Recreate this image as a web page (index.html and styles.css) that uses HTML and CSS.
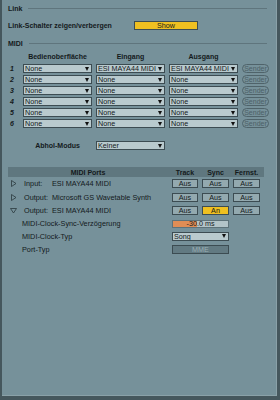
FILE: index.html
```html
<!DOCTYPE html>
<html>

<head>
	<title>MIDI Einstellungen</title>
	<link rel="stylesheet" href="styles.css">
</head>

<body>
	<div class="panel">
		<div class="section section-link">
			<span>Link</span>
			<div class="rule"></div>
		</div>
		<div class="option-row">
			<span class="option-label">Link-Schalter zeigen/verbergen</span>
			<div class="toggle on wide">Show</div>
		</div>

		<div class="section section-midi">
			<span>MIDI</span>
			<div class="rule"></div>
		</div>

		<div class="surfaces">
			<div></div>
			<div class="col-head">Bedienoberfläche</div>
			<div class="col-head">Eingang</div>
			<div class="col-head">Ausgang</div>
			<div></div>

			<div class="num">1</div>
			<div class="select"><span class="value">None</span><span class="arrow"></span></div>
			<div class="select"><span class="value">ESI MAYA44 MIDI</span><span class="arrow"></span></div>
			<div class="select"><span class="value">ESI MAYA44 MIDI</span><span class="arrow"></span></div>
			<div class="sender">Sender</div>

			<div class="num">2</div>
			<div class="select"><span class="value">None</span><span class="arrow"></span></div>
			<div class="select"><span class="value">None</span><span class="arrow"></span></div>
			<div class="select"><span class="value">None</span><span class="arrow"></span></div>
			<div class="sender">Sender</div>

			<div class="num">3</div>
			<div class="select"><span class="value">None</span><span class="arrow"></span></div>
			<div class="select"><span class="value">None</span><span class="arrow"></span></div>
			<div class="select"><span class="value">None</span><span class="arrow"></span></div>
			<div class="sender">Sender</div>

			<div class="num">4</div>
			<div class="select"><span class="value">None</span><span class="arrow"></span></div>
			<div class="select"><span class="value">None</span><span class="arrow"></span></div>
			<div class="select"><span class="value">None</span><span class="arrow"></span></div>
			<div class="sender">Sender</div>

			<div class="num">5</div>
			<div class="select"><span class="value">None</span><span class="arrow"></span></div>
			<div class="select"><span class="value">None</span><span class="arrow"></span></div>
			<div class="select"><span class="value">None</span><span class="arrow"></span></div>
			<div class="sender">Sender</div>

			<div class="num">6</div>
			<div class="select"><span class="value">None</span><span class="arrow"></span></div>
			<div class="select"><span class="value">None</span><span class="arrow"></span></div>
			<div class="select"><span class="value">None</span><span class="arrow"></span></div>
			<div class="sender">Sender</div>
		</div>

		<div class="takeover">
			<div></div>
			<div class="col-head">Abhol-Modus</div>
			<div class="select"><span class="value">Keiner</span><span class="arrow"></span></div>
		</div>

		<div class="ports">
			<div class="ports-head name">MIDI Ports</div>
			<div class="ports-head">Track</div>
			<div class="ports-head">Sync</div>
			<div class="ports-head">Fernst.</div>

			<div class="port">
				<svg class="disclose" width="7" height="7" viewBox="0 0 7 7"><polygon points="1.5,0.5 6,3.5 1.5,6.5" /></svg>
				<span class="port-kind">Input:</span>
				<span>ESI MAYA44 MIDI</span>
			</div>
			<div class="cell"><div class="toggle">Aus</div></div>
			<div class="cell"><div class="toggle">Aus</div></div>
			<div class="cell"><div class="toggle">Aus</div></div>

			<div class="port">
				<svg class="disclose" width="7" height="7" viewBox="0 0 7 7"><polygon points="1.5,0.5 6,3.5 1.5,6.5" /></svg>
				<span class="port-kind">Output:</span>
				<span>Microsoft GS Wavetable Synth</span>
			</div>
			<div class="cell"><div class="toggle">Aus</div></div>
			<div class="cell"><div class="toggle">Aus</div></div>
			<div class="cell"><div class="toggle">Aus</div></div>

			<div class="port">
				<svg class="disclose" width="7" height="7" viewBox="0 0 7 7"><polygon points="0.5,1.5 6.5,1.5 3.5,6" /></svg>
				<span class="port-kind">Output:</span>
				<span>ESI MAYA44 MIDI</span>
			</div>
			<div class="cell"><div class="toggle">Aus</div></div>
			<div class="cell"><div class="toggle on">An</div></div>
			<div class="cell"><div class="toggle">Aus</div></div>

			<div class="sub">MIDI-Clock-Sync-Verzögerung</div>
			<div class="cell span2"><div class="slider">-30.0 ms</div></div>
			<div></div>

			<div class="sub">MIDI-Clock-Typ</div>
			<div class="cell span2"><div class="select"><span class="value">Song</span><span class="arrow"></span></div></div>
			<div></div>

			<div class="sub">Port-Typ</div>
			<div class="cell span2"><div class="toggle disabled">MME</div></div>
			<div></div>
		</div>
	</div>
</body>

</html>
```

FILE: styles.css
```css
body {
	margin: 0;
	background-color: #45575d;
	font-family: "Liberation Sans", Arial, sans-serif;
	font-size: 7px;
	color: #141a1c;
}

.panel {
	margin: 0 3px 0 2px;
	height: 396px;
	padding: 2px 9px 0 6px;
	box-sizing: border-box;
	background-color: #76919a;
	border-right: 1px solid #8aa1a8;
	border-bottom: 1px solid #8aa1a8;
}

.section {
	display: flex;
	align-items: center;
	gap: 6px;
	height: 12px;
	font-weight: bold;
}

.section-midi {
	margin-top: 7px;
}

.rule {
	flex: 1;
	border-top: 1px solid #5f757d;
}

.option-row {
	display: flex;
	align-items: center;
	height: 10px;
	margin-top: 6px;
}

.option-label {
	width: 126px;
	font-weight: bold;
}

.toggle {
	height: 9px;
	box-sizing: border-box;
	display: flex;
	align-items: center;
	justify-content: center;
	border: 1px solid #3c4c52;
	background-color: #93a9af;
	font-size: 7.2px;
}

.toggle.on {
	background-color: #efc021;
}

.toggle.wide {
	width: 64px;
}

.toggle.disabled {
	background-color: #627a82;
	color: #9cb0b5;
	width: 100%;
}

.surfaces,
.takeover {
	display: grid;
	grid-template-columns: 11px 69px 69px 69px 27px;
	column-gap: 4px;
	row-gap: 2px;
}

.surfaces {
	grid-template-rows: 11px repeat(6, 9px);
	margin-top: 2px;
}

.takeover {
	grid-template-rows: 9px;
	margin-top: 13px;
}

.col-head {
	display: flex;
	align-items: center;
	justify-content: center;
	font-weight: bold;
}

.num {
	display: flex;
	align-items: center;
	padding-left: 2px;
	font-weight: bold;
	font-style: italic;
}

.select {
	display: flex;
	align-items: center;
	height: 9px;
	box-sizing: border-box;
	padding: 0 2px 0 1px;
	border: 1px solid #3c4c52;
	background-color: #b9cace;
	font-size: 7.2px;
	overflow: hidden;
	white-space: nowrap;
}

.value {
	flex: 1;
	overflow: hidden;
}

.arrow {
	flex: none;
	width: 0;
	height: 0;
	margin-left: 1px;
	border-left: 2.5px solid transparent;
	border-right: 2.5px solid transparent;
	border-top: 4px solid #111;
}

.sender {
	display: flex;
	align-items: center;
	justify-content: center;
	height: 9px;
	box-sizing: border-box;
	border: 1px solid #4f636a;
	border-radius: 5px;
	color: #4c6067;
	font-size: 7px;
	line-height: 1;
	overflow: hidden;
}

.ports {
	display: grid;
	grid-template-columns: 1fr 26px 27px 27px;
	grid-template-rows: 10px 13px 14px 13px 13px 12px 14px;
	column-gap: 4px;
	width: 252px;
	margin-top: 17px;
}

.ports-head {
	display: flex;
	align-items: center;
	justify-content: center;
	background-color: #5f777f;
	font-weight: bold;
	margin-right: -4px;
	padding-right: 4px;
}

.ports-head:last-of-type {
	margin-right: 0;
	padding-right: 0;
}

.port {
	display: flex;
	align-items: center;
	font-size: 7.3px;
	white-space: nowrap;
}

.disclose {
	margin: 0 7px 0 2px;
}

.disclose polygon {
	fill: none;
	stroke: #2b393e;
	stroke-width: 0.8;
}

.port-kind {
	width: 28px;
}

.cell {
	display: flex;
	align-items: center;
}

.cell .toggle,
.cell .select {
	width: 100%;
}

.span2 {
	grid-column: span 2;
}

.sub {
	display: flex;
	align-items: center;
	padding-left: 14px;
	font-size: 7.3px;
}

.slider {
	width: 100%;
	height: 8px;
	box-sizing: border-box;
	display: flex;
	align-items: center;
	justify-content: center;
	border: 1px solid #5d7279;
	background: linear-gradient(to right, #e08d55 43%, #b3c4c8 43%);
	font-size: 7.2px;
}
```
